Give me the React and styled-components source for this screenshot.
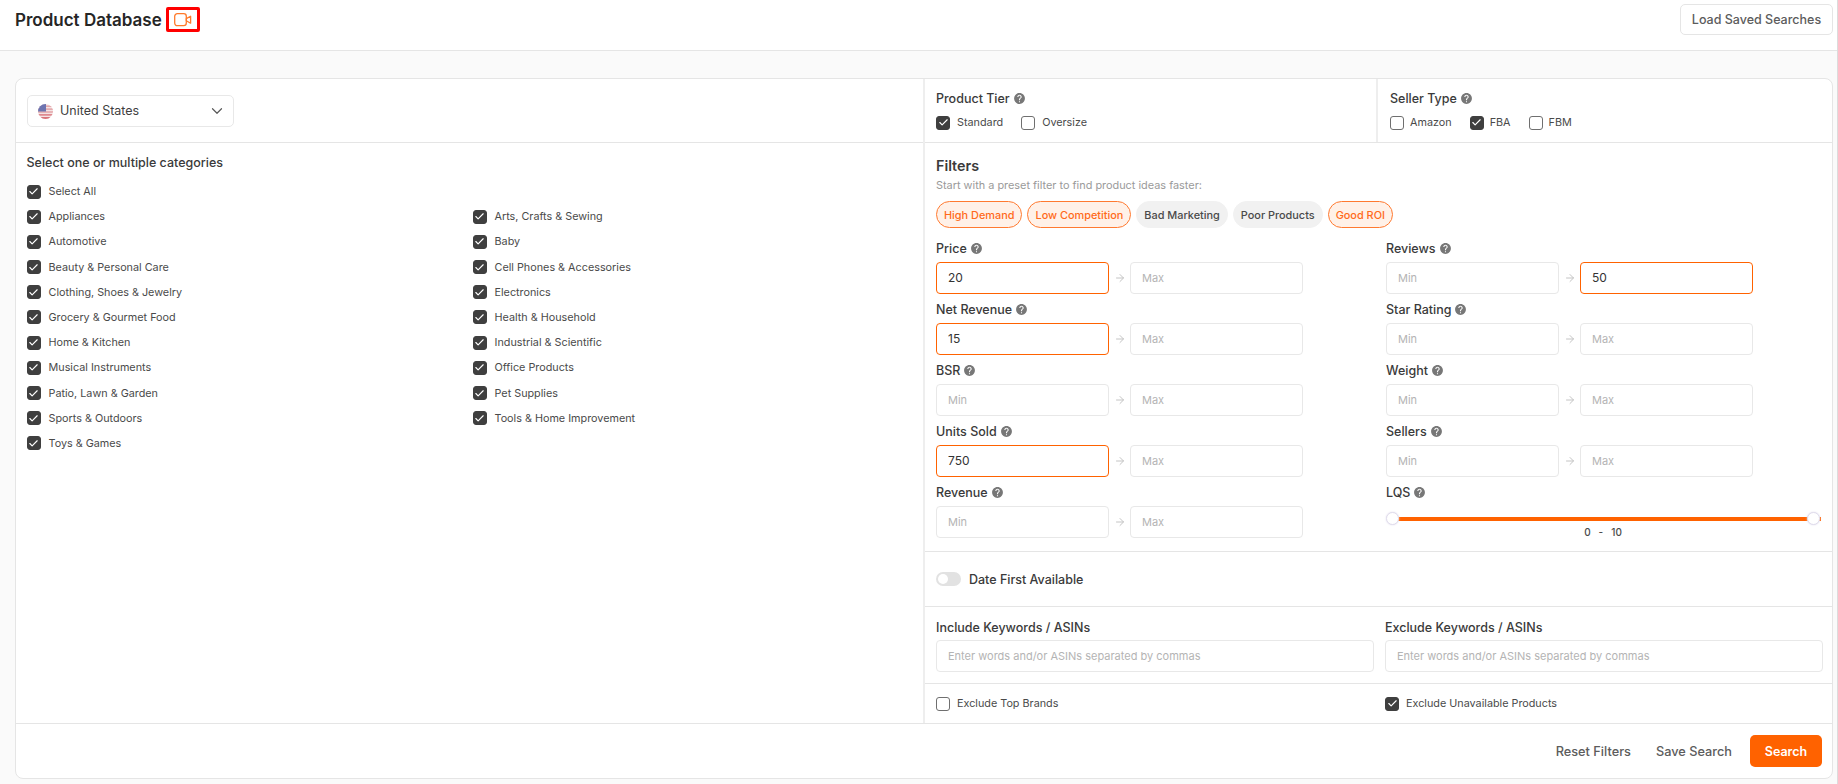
import React from 'react';
import styled, { createGlobalStyle } from 'styled-components';
import { ArrowRight, ChevronDown, Check } from 'lucide-react';
import { MdHelp } from 'react-icons/md';

const GlobalStyle = createGlobalStyle`
  * { box-sizing: border-box; }
  html, body { margin: 0; padding: 0; background: #fafafa; }
  body { font-family: Inter, "Noto Sans", sans-serif; color: #3a3a3a; }
`;

const categories = [
  'Appliances', 'Arts, Crafts & Sewing',
  'Automotive', 'Baby',
  'Beauty & Personal Care', 'Cell Phones & Accessories',
  'Clothing, Shoes & Jewelry', 'Electronics',
  'Grocery & Gourmet Food', 'Health & Household',
  'Home & Kitchen', 'Industrial & Scientific',
  'Musical Instruments', 'Office Products',
  'Patio, Lawn & Garden', 'Pet Supplies',
  'Sports & Outdoors', 'Tools & Home Improvement',
  'Toys & Games',
];

const presets = [
  { name: 'High Demand', active: true },
  { name: 'Low Competition', active: true },
  { name: 'Bad Marketing', active: false },
  { name: 'Poor Products', active: false },
  { name: 'Good ROI', active: true },
];

const leftFields = [
  { name: 'Price', min: '20' },
  { name: 'Net Revenue', min: '15' },
  { name: 'BSR' },
  { name: 'Units Sold', min: '750' },
  { name: 'Revenue' },
];

const rightFields = [
  { name: 'Reviews', max: '50' },
  { name: 'Star Rating' },
  { name: 'Weight' },
  { name: 'Sellers' },
];

function CheckBox({ checked, label, gap = 7 }) {
  return (
    <CheckRow $gap={gap}>
      <Box $checked={checked}>
        {checked && <Check size={11} strokeWidth={2.5} color="#fff" />}
      </Box>
      <span>{label}</span>
    </CheckRow>
  );
}

function Help() {
  return <HelpIcon><MdHelp size={13} /></HelpIcon>;
}

function RangeField({ name, min, max }) {
  return (
    <div>
      <FieldLabel>{name} <Help /></FieldLabel>
      <RangeRow>
        <TextInput $active={!!min} placeholder="Min" defaultValue={min} />
        <ArrowRight size={12} color="#c4c4c4" />
        <TextInput $active={!!max} placeholder="Max" defaultValue={max} />
      </RangeRow>
    </div>
  );
}

function UsFlag() {
  return (
    <svg width="15" height="15" viewBox="0 0 15 15">
      <defs>
        <clipPath id="flagClip"><circle cx="7.5" cy="7.5" r="7.5" /></clipPath>
      </defs>
      <g clipPath="url(#flagClip)">
        <rect width="15" height="15" fill="#f4e3e3" />
        <rect y="1.5" width="15" height="1.4" fill="#e2a0a4" />
        <rect y="4.4" width="15" height="1.4" fill="#e2a0a4" />
        <rect y="7.3" width="15" height="1.4" fill="#e2a0a4" />
        <rect y="10.2" width="15" height="1.4" fill="#d9747c" />
        <rect y="13" width="15" height="2" fill="#d9747c" />
        <rect width="8" height="7.5" fill="#6d74b0" />
      </g>
    </svg>
  );
}

function VideoIcon() {
  return (
    <svg width="18" height="14" viewBox="0 0 18 14" fill="none" stroke="#ff7a2b" strokeWidth="1.3" strokeLinejoin="round">
      <rect x="0.7" y="0.7" width="11.6" height="12" rx="2.6" />
      <path d="M12.3 5.6 L16.6 3.2 V10.2 L12.3 7.8 Z" />
    </svg>
  );
}

export default function App() {
  return (
    <Page>
      <GlobalStyle />
      <Header>
        <TitleWrap>
          <Title>Product Database</Title>
          <VideoBadge><VideoIcon /></VideoBadge>
        </TitleWrap>
        <OutlineButton>Load Saved Searches</OutlineButton>
      </Header>

      <Main>
        <Card>
          <Columns>
            <LeftColumn>
              <SelectBar>
                <CountrySelect>
                  <UsFlag />
                  <CountryName>United States</CountryName>
                  <ChevronDown size={18} color="#5a5a5a" strokeWidth={1.6} />
                </CountrySelect>
              </SelectBar>
              <Categories>
                <SectionTitle>Select one or multiple categories</SectionTitle>
                <CategoryGrid>
                  <SelectAll><CheckBox checked gap={8} label="Select All" /></SelectAll>
                  {categories.map(c => <CheckBox key={c} checked gap={8} label={c} />)}
                </CategoryGrid>
              </Categories>
            </LeftColumn>

            <RightColumn>
              <TopOptions>
                <TierBlock>
                  <OptionLabel>Product Tier <Help /></OptionLabel>
                  <OptionRow>
                    <CheckBox checked label="Standard" />
                    <CheckBox label="Oversize" />
                  </OptionRow>
                </TierBlock>
                <SellerBlock>
                  <OptionLabel>Seller Type <Help /></OptionLabel>
                  <OptionRow>
                    <CheckBox gap={6} label="Amazon" />
                    <CheckBox checked gap={6} label="FBA" />
                    <CheckBox gap={6} label="FBM" />
                  </OptionRow>
                </SellerBlock>
              </TopOptions>

              <Filters>
                <FiltersTitle>Filters</FiltersTitle>
                <FiltersHint>Start with a preset filter to find product ideas faster:</FiltersHint>
                <Pills>
                  {presets.map(p => <Pill key={p.name} $active={p.active}>{p.name}</Pill>)}
                </Pills>
                <FieldGrid>
                  <FieldColumn>
                    {leftFields.map(f => <RangeField key={f.name} {...f} />)}
                  </FieldColumn>
                  <FieldColumn>
                    {rightFields.map(f => <RangeField key={f.name} {...f} />)}
                    <div>
                      <FieldLabel>LQS <Help /></FieldLabel>
                      <Slider>
                        <Track />
                        <Thumb $left={0} />
                        <Thumb $left={420.5} />
                      </Slider>
                      <SliderValue><span>0</span><span>-</span><span>10</span></SliderValue>
                    </div>
                  </FieldColumn>
                </FieldGrid>
              </Filters>

              <DateRow>
                <Toggle />
                <DateLabel>Date First Available</DateLabel>
              </DateRow>

              <KeywordRow>
                <div>
                  <KeywordLabel>Include Keywords / ASINs</KeywordLabel>
                  <TextInput $wide placeholder="Enter words and/or ASINs separated by commas" />
                </div>
                <div>
                  <KeywordLabel>Exclude Keywords / ASINs</KeywordLabel>
                  <TextInput $wide placeholder="Enter words and/or ASINs separated by commas" />
                </div>
              </KeywordRow>

              <ExcludeRow>
                <CheckBox label="Exclude Top Brands" />
                <CheckBox checked label="Exclude Unavailable Products" />
              </ExcludeRow>
            </RightColumn>
          </Columns>

          <Footer>
            <TextButton>Reset Filters</TextButton>
            <TextButton>Save Search</TextButton>
            <SearchButton>Search</SearchButton>
          </Footer>
        </Card>
      </Main>
    </Page>
  );
}

const Page = styled.div`
min-height: 100vh;
border-right: 1px solid #dcdcdc;
`

const Header = styled.header`
display: flex;
justify-content: space-between;
align-items: center;
height: 51px;
padding: 0 4px 11px 15px;
background: #fff;
border-bottom: 1px solid #e5e5e5;
`

const TitleWrap = styled.div`
display: flex;
align-items: center;
gap: 4px;
`

const Title = styled.h1`
margin: 0;
font-size: 17px;
font-weight: 600;
color: #262626;
`

const VideoBadge = styled.span`
display: flex;
align-items: center;
justify-content: center;
width: 34px;
height: 25px;
border: 3px solid #f00;
border-radius: 2px;
`

const OutlineButton = styled.button`
width: 153px;
height: 31px;
padding: 0;
background: #fff;
border: 1px solid #e5e5e5;
border-radius: 5px;
font-family: inherit;
font-size: 12.5px;
font-weight: 500;
color: #5c5c5c;
`

const Main = styled.main`
padding: 27px 4px 0 15px;
`

const Card = styled.section`
height: 701px;
background: #fff;
border: 1px solid #e5e5e5;
border-radius: 8px;
display: flex;
flex-direction: column;
overflow: hidden;
`

const Columns = styled.div`
flex: 1;
display: grid;
grid-template-columns: 909px 1fr;
border-bottom: 1px solid #e5e5e5;
`

const LeftColumn = styled.div`
border-right: 2px solid #eeeeee;
`

const SelectBar = styled.div`
height: 64px;
padding: 16px 0 0 11px;
border-bottom: 1px solid #e5e5e5;
`

const CountrySelect = styled.div`
display: flex;
align-items: center;
width: 207px;
height: 32px;
padding: 0 7px 0 10px;
border: 1px solid #e8e8e8;
border-radius: 5px;
`

const CountryName = styled.span`
flex: 1;
margin-left: 7px;
padding-bottom: 1px;
font-size: 12.5px;
color: #3f3f3f;
`

const Categories = styled.div`
padding: 11px 0 0 10.5px;
`

const SectionTitle = styled.h2`
margin: 0 0 12px;
font-size: 12.5px;
line-height: 18px;
font-weight: 500;
color: #3a3a3a;
`

const CategoryGrid = styled.div`
display: grid;
grid-template-columns: 446px 1fr;
grid-auto-rows: 25.2px;
`

const SelectAll = styled.div`
grid-column: 1 / -1;
`

const CheckRow = styled.label`
display: flex;
align-items: center;
gap: ${p => p.$gap}px;
height: 15px;
font-size: 10.8px;
color: #4a4a4a;
white-space: nowrap;
`

const Box = styled.span`
display: flex;
align-items: center;
justify-content: center;
flex: none;
width: 14px;
height: 14px;
border-radius: 3px;
background: ${p => p.$checked ? '#3f3f3f' : '#fff'};
border: 1px solid ${p => p.$checked ? '#3f3f3f' : '#6f6f6f'};
`

const RightColumn = styled.div`
display: flex;
flex-direction: column;
`

const TopOptions = styled.div`
display: grid;
grid-template-columns: 453px 1fr;
height: 64px;
border-bottom: 1px solid #e5e5e5;
`

const TierBlock = styled.div`
padding: 10px 0 0 11px;
border-right: 2px solid #eeeeee;
`

const SellerBlock = styled.div`
padding: 10px 0 0 12px;
`

const OptionLabel = styled.div`
display: flex;
align-items: center;
gap: 3px;
height: 18px;
margin-bottom: 8px;
font-size: 12.5px;
font-weight: 500;
color: #3a3a3a;
`

const OptionRow = styled.div`
display: flex;
gap: 18px;
`

const HelpIcon = styled.span`
display: inline-flex;
color: #777;
`

const Filters = styled.div`
padding: 13px 0 0 11px;
height: 409px;
border-bottom: 1px solid #e5e5e5;
`

const FiltersTitle = styled.h2`
margin: 0;
font-size: 14.3px;
line-height: 20px;
font-weight: 600;
color: #3a3a3a;
`

const FiltersHint = styled.p`
margin: 1px 0 8px;
font-size: 10.9px;
line-height: 16px;
color: #9a9a9a;
`

const Pills = styled.div`
display: flex;
gap: 5px;
margin-bottom: 11px;
`

const Pill = styled.span`
display: inline-flex;
align-items: center;
height: 27px;
padding: 0 7px;
border-radius: 14px;
font-size: 10.9px;
font-weight: 500;
color: ${p => p.$active ? '#ff6a1a' : '#4a4a4a'};
background: ${p => p.$active ? '#fff1e8' : '#f1f1f1'};
border: 1px solid ${p => p.$active ? '#ff7a30' : '#f1f1f1'};
`

const FieldGrid = styled.div`
display: grid;
grid-template-columns: 450px 1fr;
padding-right: 11px;
`

const FieldColumn = styled.div`
display: flex;
flex-direction: column;
gap: 6px;
`

const FieldLabel = styled.div`
display: flex;
align-items: center;
gap: 3px;
height: 18px;
margin-bottom: 5px;
font-size: 12.5px;
font-weight: 500;
color: #3a3a3a;
`

const RangeRow = styled.div`
display: flex;
align-items: center;
gap: 4.5px;
width: 367px;
svg { flex: none; }
`

const TextInput = styled.input`
display: block;
width: ${p => p.$wide ? '100%' : '173px'};
height: 32px;
padding: 0 11px 2px;
background: #fff;
border: 1px solid ${p => p.$active ? '#ff6200' : '#e8e8e8'};
border-radius: 4px;
outline: none;
font-family: inherit;
font-size: 12px;
color: #333;
&::placeholder { color: #b4b4b4; opacity: 1; font-size: 11px; }
`

const Slider = styled.div`
position: relative;
height: 18px;
margin-top: 8.5px;
`

const Track = styled.div`
position: absolute;
left: 6px;
right: 0;
top: 7px;
height: 4px;
background: #ff6200;
`

const Thumb = styled.span`
position: absolute;
top: 2.5px;
left: ${p => p.$left}px;
width: 13px;
height: 13px;
border-radius: 50%;
background: #fff;
border: 1px solid #e0dcec;
box-shadow: 0 0 2px #e0dcec;
`

const SliderValue = styled.div`
display: flex;
justify-content: center;
gap: 8px;
margin-top: -2px;
padding-right: 1px;
font-size: 10px;
font-weight: 500;
color: #4a4a4a;
`

const DateRow = styled.div`
display: flex;
align-items: center;
gap: 8px;
height: 55px;
padding-left: 11px;
border-bottom: 1px solid #e5e5e5;
`

const Toggle = styled.span`
position: relative;
width: 25px;
height: 14px;
border-radius: 7px;
background: #e2e2e2;
&::after {
  content: '';
  position: absolute;
  left: 2px;
  top: 2px;
  width: 10px;
  height: 10px;
  border-radius: 50%;
  background: #fff;
}
`

const DateLabel = styled.span`
font-size: 12.5px;
font-weight: 500;
color: #3a3a3a;
`

const KeywordRow = styled.div`
display: grid;
grid-template-columns: 438px 438px;
column-gap: 11px;
height: 77px;
padding: 11px 0 0 11px;
border-bottom: 1px solid #e5e5e5;
`

const KeywordLabel = styled.div`
height: 20px;
margin-bottom: 2px;
font-size: 12.5px;
line-height: 20px;
font-weight: 500;
color: #3a3a3a;
`

const ExcludeRow = styled.div`
display: grid;
grid-template-columns: 449px 1fr;
padding: 12px 0 0 11px;
`

const Footer = styled.footer`
display: flex;
justify-content: flex-end;
align-items: center;
gap: 25px;
height: 54px;
padding-right: 10px;
`

const TextButton = styled.button`
padding: 0;
background: none;
border: 0;
font-family: inherit;
font-size: 12.75px;
font-weight: 500;
color: #5c5c5c;
`

const SearchButton = styled.button`
width: 72px;
height: 32px;
margin-left: -7px;
background: #ff6200;
border: 0;
border-radius: 5px;
font-family: inherit;
font-size: 12.5px;
font-weight: 600;
color: #fff;
`
